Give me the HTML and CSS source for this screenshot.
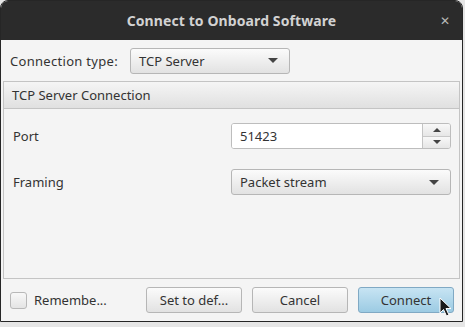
FILE: index.html
```html
<!DOCTYPE html>
<html lang="en">
<head>
    <meta charset="UTF-8">
    <title>Connect to Onboard Software</title>
    <link rel="stylesheet" href="styles.css">
</head>
<body>

    <div class="window">
        <div class="title-bar">
            <span class="title">Connect to Onboard Software</span>
            <span class="close">&#x2715;</span>
        </div>

        <div class="type-row">
            <span class="label type-label">Connection type:</span>
            <div class="combo type-combo">
                <span>TCP Server</span>
                <span class="arrow"></span>
            </div>
        </div>

        <div class="titled-pane">
            <div class="pane-header">TCP Server Connection</div>
            <div class="pane-content">
                <span class="label">Port</span>
                <div class="spinner">
                    <input type="text" value="51423">
                    <div class="spin-buttons">
                        <div class="spin-btn"><span class="arrow up"></span></div>
                        <div class="spin-btn"><span class="arrow"></span></div>
                    </div>
                </div>

                <span class="label">Framing</span>
                <div class="combo">
                    <span>Packet stream</span>
                    <span class="arrow"></span>
                </div>
            </div>
        </div>

        <div class="button-bar">
            <label class="remember">
                <span class="check-box"></span>
                <span>Remembe...</span>
            </label>
            <button class="btn">Set to def...</button>
            <button class="btn">Cancel</button>
            <button class="btn default">Connect</button>
        </div>

        <!-- mouse pointer over the Connect button -->
        <svg class="cursor" width="14" height="22" viewBox="0 0 14 22">
            <path d="M1 1 L1 16 L4.5 12.5 L7.5 19 L10 18 L7 11.5 L12 11.5 Z" fill="#1a1a1a" stroke="#ffffff" stroke-width="1"/>
        </svg>
    </div>

</body>
</html>
```

FILE: styles.css
```css
body {
    margin: 0;
    background-color: #e6e6e6;
    font-family: "Noto Sans", "Open Sans", sans-serif;
    font-size: 13px;
    color: #333;
}

.window {
    position: relative;
    width: 461px;
    height: 320px;
    border: 1px solid #262626;
    border-radius: 8px 8px 0 0;
    background-color: #f4f4f4;
    display: flex;
    flex-direction: column;
    overflow: hidden;
}

.title-bar {
    height: 39px;
    flex-shrink: 0;
    background-color: #2b2b2b;
    display: flex;
    align-items: center;
    justify-content: center;
    position: relative;
}

.title {
    color: #d2d2d2;
    font-weight: bold;
    font-size: 14px;
    letter-spacing: 0.1px;
}

.close {
    position: absolute;
    right: 12px;
    top: 11px;
    color: #b8b8b8;
    font-size: 12px;
}

.type-row {
    height: 41px;
    flex-shrink: 0;
    display: flex;
    align-items: center;
    padding-left: 9px;
}

.type-label {
    width: 120px;
    letter-spacing: 0.3px;
}

.combo {
    height: 26px;
    border: 1px solid #b6b6b6;
    border-radius: 3px;
    background: linear-gradient(#fbfbfb, #e2e2e2);
    display: flex;
    align-items: center;
    justify-content: space-between;
    padding: 0 11px 0 8px;
    box-sizing: border-box;
}

.type-combo {
    width: 160px;
}

.arrow {
    width: 0;
    height: 0;
    border-left: 5px solid transparent;
    border-right: 5px solid transparent;
    border-top: 5px solid #444;
}

.arrow.up {
    border-top: none;
    border-bottom: 5px solid #444;
}

.titled-pane {
    margin: 0 2px;
    height: 198px;
    display: flex;
    flex-direction: column;
}

.pane-header {
    height: 26px;
    flex-shrink: 0;
    border: 1px solid #c4c4c4;
    background: linear-gradient(#f5f5f5, #e0e0e0);
    padding-left: 8px;
    display: flex;
    align-items: center;
}

.pane-content {
    flex: 1;
    border: 1px solid #c4c4c4;
    border-top: none;
    display: grid;
    grid-template-columns: 1fr 220px;
    grid-auto-rows: 26px;
    row-gap: 20px;
    align-items: center;
    align-content: start;
    padding: 14px 8px 0 9px;
}

.spinner {
    display: flex;
    height: 26px;
    border: 1px solid #bdbdbd;
    border-radius: 3px;
    box-sizing: border-box;
    background-color: #fff;
    overflow: hidden;
}

.spinner input {
    flex: 1;
    min-width: 0;
    border: none;
    outline: none;
    padding: 0 0 0 8px;
    font-family: inherit;
    font-size: 13px;
    color: #333;
    background: #fff;
}

.spin-buttons {
    width: 27px;
    display: flex;
    flex-direction: column;
    border-left: 1px solid #c4c4c4;
}

.spin-btn {
    flex: 1;
    display: flex;
    align-items: center;
    justify-content: center;
    background: linear-gradient(#f8f8f8, #e6e6e6);
}

.spin-btn + .spin-btn {
    border-top: 1px solid #c8c8c8;
}

.spin-btn .arrow {
    border-left-width: 4px;
    border-right-width: 4px;
    border-top-width: 4px;
}

.spin-btn .arrow.up {
    border-bottom-width: 4px;
}

.button-bar {
    flex: 1;
    display: flex;
    align-items: flex-start;
    padding: 8px 8px 0 9px;
    gap: 10px;
}

.remember {
    display: flex;
    align-items: center;
    gap: 7px;
    margin-top: 4px;
    width: 126px;
}

.check-box {
    width: 15px;
    height: 15px;
    border: 1px solid #b8b8b8;
    border-radius: 3px;
    background: linear-gradient(#f8f8f8, #e4e4e4);
}

.btn {
    width: 96px;
    height: 26px;
    border: 1px solid #b6b6b6;
    border-radius: 3px;
    background: linear-gradient(#fbfbfb, #e2e2e2);
    font-family: inherit;
    font-size: 13px;
    color: #333;
    padding: 0;
}

.btn.default {
    border-color: #80a9c4;
    background: linear-gradient(#c7e4f3, #9ccbe3);
}

.cursor {
    position: absolute;
    left: 438px;
    top: 296px;
}
```
